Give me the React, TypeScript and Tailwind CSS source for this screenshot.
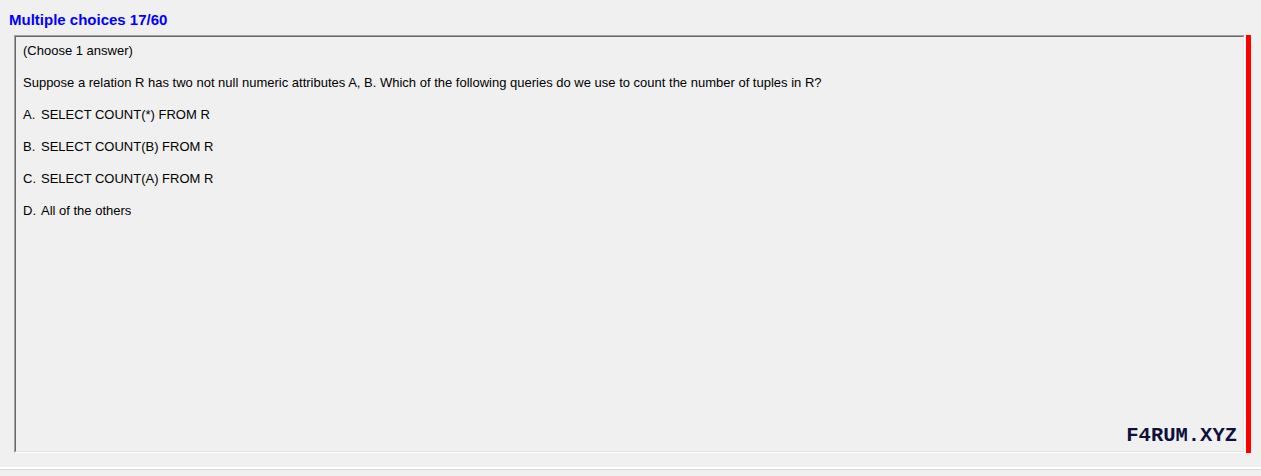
import React from "react";

const options = [
  ["A.", "SELECT COUNT(*) FROM R"],
  ["B.", "SELECT COUNT(B) FROM R"],
  ["C.", "SELECT COUNT(A) FROM R"],
  ["D.", "All of the others"],
];

export default function App() {
  return (
    <div
      className="w-[1261px] h-[476px] bg-[#f0f0f0] flex flex-col overflow-hidden"
      style={{ fontFamily: '"Liberation Sans", Arial, sans-serif' }}
    >
      <div className="h-[35px] pt-[12px] pl-[9px]">
        <div className="text-[15px] leading-4 font-bold text-[#0000ff]">Multiple choices 17/60</div>
      </div>
      <div className="flex pl-[14px] gap-[1px]">
        <div className="w-[1231px] h-[418px] border-t border-l border-t-[#a0a0a0] border-l-[#a0a0a0] border-b border-r border-b-white border-r-white">
          <div className="relative h-full border-t border-l border-t-[#696969] border-l-[#696969] border-b border-r border-b-[#e3e3e3] border-r-[#e3e3e3] pl-[7px] pt-[6px] flex flex-col gap-4 text-[13px] leading-4 text-black">
            <div>(Choose 1 answer)</div>
            <div>
              Suppose a relation R has two not null numeric attributes A, B. Which of the following queries do we use to count the number of tuples in R?
            </div>
            {options.map(([l, t]) => (
              <div key={l} className="flex">
                <span className="w-[18px]">{l}</span>
                <span>{t}</span>
              </div>
            ))}
            <div
              className="absolute right-[6px] bottom-[3px] text-[20.5px] leading-6 font-bold text-[#10103c]"
              style={{ fontFamily: '"Liberation Mono", "DejaVu Sans Mono", monospace' }}
            >
              F4RUM.XYZ
            </div>
          </div>
        </div>
        <div className="w-[5px] h-[418px] bg-[#ff0000]" />
      </div>
      <div className="h-[14px]" />
      <div className="h-[2px] bg-white" />
      <div className="h-px bg-[#dadada]" />
    </div>
  );
}
